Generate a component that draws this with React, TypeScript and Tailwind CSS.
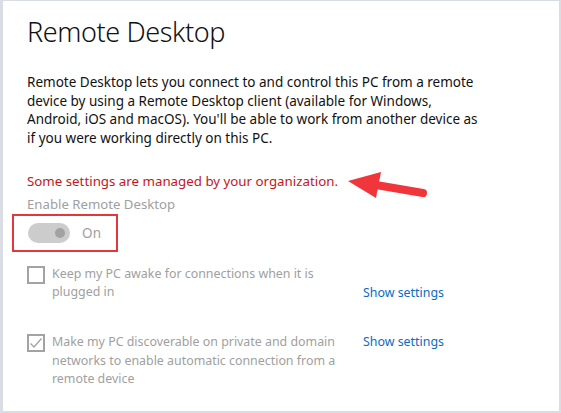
import React from "react";

const font = { fontFamily: '"Segoe UI", "Noto Sans", "Open Sans", sans-serif' };

function Checkbox({ checked }: { checked?: boolean }) {
  return (
    <div className="w-[18px] h-[18px] border-2 border-[#a3a3a3] shrink-0 flex items-center justify-center mt-[1px]">
      {checked && (
        <svg width="14" height="14" viewBox="0 0 14 14" fill="none">
          <path d="M1.5 7.5 L5 11 L12.5 2.5" stroke="#a3a3a3" strokeWidth="1.4" />
        </svg>
      )}
    </div>
  );
}

export default function App() {
  return (
    <div
      className="relative w-[561px] h-[413px] bg-white border-l-[3px] border-t border-r-2 border-b-2 border-[#dadee4] overflow-hidden"
      style={font}
    >
      <div className="pl-[24px] pt-[11px]">
        {/* Header */}
        <h1 className="text-[27px] leading-[40px] font-light tracking-[-0.4px] text-[#111]">Remote Desktop</h1>

        <p className="mt-[21px] w-[452px] text-[13.5px] leading-[18.5px] text-[#111]">
          Remote Desktop lets you connect to and control this PC from a remote device by using a
          Remote Desktop client (available for Windows, Android, iOS and macOS). You'll be able to
          work from another device as if you were working directly on this PC.
        </p>

        <p className="mt-[24px] text-[13.3px] leading-[20px] text-[#c4161c]">
          Some settings are managed by your organization.
        </p>
        <p className="mt-[3px] text-[13.2px] leading-[20px] text-[#a0a0a0]">Enable Remote Desktop</p>

        {/* Toggle, boxed */}
        <div className="-ml-[15px] inline-flex items-center gap-[12px] border-2 border-[#e3373d] pl-[14px] pr-[15px] h-[38px] w-[106px]">
          <div className="w-[44px] h-[20px] rounded-full bg-[#cccccc] flex items-center justify-end pr-[5px]">
            <div className="w-[10px] h-[10px] rounded-full bg-[#a2a2a2]" />
          </div>
          <span className="text-[13.5px] text-[#a0a0a0]">On</span>
        </div>

        {/* Options */}
        <div className="mt-[13px] flex items-end">
          <div className="flex gap-[7px]">
            <Checkbox />
            <span className="w-[311px] pr-[12px] text-[12.4px] leading-[18px] text-[#a0a0a0]">
              Keep my PC awake for connections when it is plugged in
            </span>
          </div>
          <span className="text-[12.4px] leading-[18px] text-[#0a6cc4] -mb-[1px]">Show settings</span>
        </div>

        <div className="mt-[32px] flex items-start">
          <div className="flex gap-[7px]">
            <Checkbox checked />
            <span className="w-[311px] pr-[12px] text-[12.4px] leading-[18.5px] text-[#a0a0a0]">
              Make my PC discoverable on private and domain networks to enable automatic connection
              from a remote device
            </span>
          </div>
          <span className="text-[12.4px] leading-[18px] text-[#0a6cc4]">Show settings</span>
        </div>
      </div>

      {/* Annotation arrow */}
      <svg className="absolute left-[340px] top-[166px]" width="90" height="36" viewBox="0 0 90 36">
        <path d="M33 18 L80 26" stroke="#f0363a" strokeWidth="8" strokeLinecap="round" />
        <path d="M5 14 L38 5 L33 31 Z" fill="#f0363a" />
      </svg>
    </div>
  );
}
